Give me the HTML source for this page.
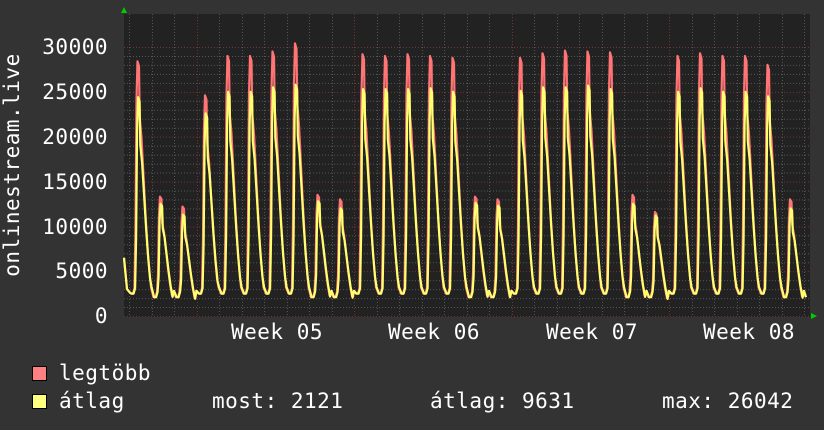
<!DOCTYPE html>
<html><head><meta charset="utf-8"><style>
html,body{margin:0;padding:0;background:#333;}
body{width:824px;height:430px;overflow:hidden;position:relative;font-family:"DejaVu Sans Mono","Liberation Mono",monospace;}
svg{position:absolute;left:0;top:0}
text{font-family:"DejaVu Sans Mono","Liberation Mono",monospace;font-size:21px;letter-spacing:0.5px;fill:#fff}
</style></head><body>
<svg id="s" width="824" height="430" xmlns="http://www.w3.org/2000/svg">
<rect x="124" y="14" width="686" height="303" fill="#222"/>
<g id="grid"></g>
<path id="pr" fill="none" stroke="#ff7474" stroke-width="2.2" stroke-linejoin="round"/>
<path id="py" fill="none" stroke="#ffff70" stroke-width="2.2" stroke-linejoin="round"/>
<polygon points="121,13 127,13 124,7" fill="#0c0"/>
<polygon points="811,313 811,319 817,316" fill="#0c0"/>
<g text-anchor="end">
<text x="108" y="54">30000</text><text x="108" y="99">25000</text><text x="108" y="144">20000</text>
<text x="108" y="189">15000</text><text x="108" y="234">10000</text><text x="108" y="278">5000</text>
<text x="108" y="323">0</text>
</g>
<text x="231" y="339">Week 05</text><text x="388" y="339">Week 06</text>
<text x="546" y="339">Week 07</text><text x="703" y="339">Week 08</text>
<text transform="translate(19,165) rotate(-90)" text-anchor="middle">onlinestream.live</text>
<rect x="32.5" y="366.5" width="14" height="14" fill="#ff8080" stroke="#000"/>
<rect x="32.5" y="394.5" width="14" height="14" fill="#ffff80" stroke="#000"/>
<text x="59" y="380">legtöbb</text>
<text x="59" y="408">átlag</text>
<text x="212" y="408">most: 2121</text>
<text x="430" y="408">átlag: 9631</text>
<text x="662" y="408">max: 26042</text>
</svg>
<script>
var g=document.getElementById('grid'),h='';
function Y(v){return 316-v*269/30000;}
for(var k=0;k<=30;k++){var y=Y(k*1000);if(y<14)break;var maj=k%5==0;
h+='<line x1="124" x2="810" y1="'+(y+.5)+'" y2="'+(y+.5)+'" stroke="'+(maj?'#7a3030':'#555')+'" stroke-dasharray="1,2"/>';}
for(var i=0;i<31;i++){var x=129+22.5*i;if(x>810)break;var maj=((i-3)%7==0);
h+='<line y1="14" y2="316" x1="'+(Math.round(x)+.5)+'" x2="'+(Math.round(x)+.5)+'" stroke="'+(maj?'#7a3030':'#555')+'" stroke-dasharray="1,2"/>';}
g.innerHTML=h;
var P=[[28400,24400],[13300,12500],[12200,11300],[24600,22600],[29000,25000],[29000,25000],[29500,25500],[30400,25800],[13500,12800],[13000,12000],[29200,25300],[29000,25300],[29200,25300],[29000,25400],[28800,25000],[13300,12600],[13000,12300],[28800,25100],[29300,25500],[29600,25500],[29500,25700],[29400,25300],[13500,12500],[11600,11200],[29000,25000],[29300,25400],[29000,25000],[29000,25000],[28000,24500],[13000,12000]];
function build(idx,off){var d='M124,'+Y(6500)+' L127,'+Y(3000)+' L130,'+Y(2600);
for(var i=0;i<P.length;i++){var px=137.5+22.5*i,p=P[i][idx],t=(p<15000?2100:2500);
var f=[[-6.5,t],[-4.5,t],[-3,t+600],[-2,p*0.35],[-1,p*0.85],[0,p],[1.5,p*0.98],[2.2,p*0.78],[4,p*0.7],[6,p*0.55],[8,p*0.4],[10,p*0.27],[12,p*0.17],[13.5,t+700]];
for(var j=0;j<f.length;j++){var x=px+f[j][0]+off;if(x>806)break;d+=' L'+x.toFixed(1)+','+Y(f[j][1]).toFixed(1);}}
d+=' L806,'+Y(2100);return d;}
document.getElementById('pr').setAttribute('d',build(0,0));
document.getElementById('py').setAttribute('d',build(1,0.6));
</script>
</body></html>
